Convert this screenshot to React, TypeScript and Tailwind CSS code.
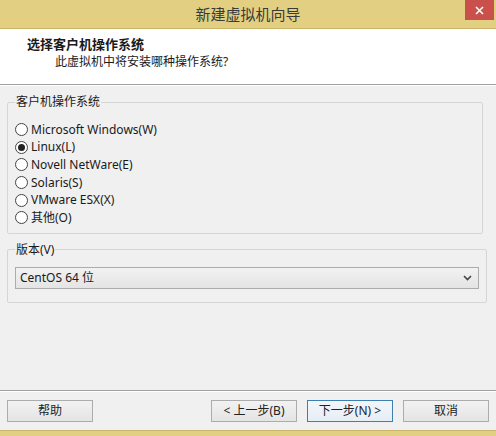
const systems = [
  { id: "win", label: "Microsoft Windows(W)" },
  { id: "linux", label: "Linux(L)" },
  { id: "netware", label: "Novell NetWare(E)" },
  { id: "solaris", label: "Solaris(S)" },
  { id: "esx", label: "VMware ESX(X)" },
  { id: "other", label: "其他(O)" },
];

const font = { fontFamily: '"Noto Sans", "Noto Sans CJK SC", sans-serif' };

function Radio({ checked }: { checked: boolean }) {
  return (
    <span className="flex h-[13px] w-[13px] shrink-0 items-center justify-center rounded-full border border-[#444] bg-white">
      {checked && <span className="h-[7px] w-[7px] rounded-full bg-[#222]" />}
    </span>
  );
}

function Button({ label, primary }: { label: string; primary?: boolean }) {
  return (
    <button
      className={`h-[22px] w-[86px] border text-[12px] leading-none text-[#222] ${
        primary
          ? "border-[#3c7fb1] bg-gradient-to-b from-[#f2f6fa] to-[#e6eef6]"
          : "border-[#acacac] bg-gradient-to-b from-[#f2f2f2] to-[#e4e4e4]"
      }`}
    >
      {label}
    </button>
  );
}

export default function App() {
  return (
    <div className="flex h-[436px] w-[496px] flex-col bg-[#f0f0f0] text-[#1a1a1a]" style={font}>
      {/* Title bar */}
      <div className="relative flex h-[29px] shrink-0 items-center justify-center border-b border-[#c9b46a] bg-[#e3cf81]">
        <span className="text-[15px] text-[#3a3a3a]">新建虚拟机向导</span>
        <div className="absolute right-[2px] top-0 flex h-[20px] w-[29px] items-center justify-center bg-[#c9504b]">
          <svg width="9" height="9" viewBox="0 0 9 9">
            <path d="M1 1 L8 8 M8 1 L1 8" stroke="white" strokeWidth="1.6" />
          </svg>
        </div>
      </div>

      {/* Header */}
      <div className="flex h-[56px] shrink-0 flex-col border-b border-[#a0a0a0] bg-white pl-[27px] pt-[6px]">
        <span className="text-[13px] font-bold leading-[18px]">选择客户机操作系统</span>
        <span className="pl-[28px] text-[12px] leading-[18px]">此虚拟机中将安装哪种操作系统?</span>
      </div>
      <div className="h-px shrink-0 bg-white" />

      {/* Body */}
      <div className="flex flex-1 flex-col gap-[8px] px-[7px] pt-[8px]">
        <fieldset className="w-[476px] rounded-[2px] border border-[#d5d5d5] pb-[6px] pl-[7px]">
          <legend className="px-px text-[12px] leading-[16px]">客户机操作系统</legend>
          <div className="mt-[11px] flex flex-col">
            {systems.map((s) => (
              <label key={s.id} className="flex h-[17.6px] items-center gap-[3px] text-[12px]">
                <Radio checked={s.id === "linux"} />
                <span>{s.label}</span>
              </label>
            ))}
          </div>
        </fieldset>

        <fieldset className="w-[476px] rounded-[2px] border border-[#d5d5d5] px-[7px] pb-[13px]">
          <legend className="px-px text-[12px] leading-[16px]">版本(V)</legend>
          <div className="mt-[9px] flex h-[22px] w-[464px] items-center justify-between border border-[#acacac] bg-gradient-to-b from-[#f2f2f2] to-[#e4e4e4] pl-[4px] pr-[6px] text-[12px]">
            <span>CentOS 64 位</span>
            <svg width="9" height="6" viewBox="0 0 9 6">
              <path d="M1 1 L4.5 4.5 L8 1" stroke="#444" strokeWidth="1.6" fill="none" />
            </svg>
          </div>
        </fieldset>
      </div>

      {/* Footer */}
      <div className="shrink-0 border-t border-[#a0a0a0]">
        <div className="flex h-[39px] items-center border-t border-white px-[7px]">
          <Button label="帮助" />
          <div className="ml-auto flex gap-[10px]">
            <div className="flex">
              <Button label="< 上一步(B)" />
              <div className="w-[10px]" />
              <Button label="下一步(N) >" primary />
            </div>
            <Button label="取消" />
          </div>
        </div>
      </div>
      <div className="h-[6px] shrink-0 border-t border-[#c9b46a] bg-[#e3cf81]" />
    </div>
  );
}
